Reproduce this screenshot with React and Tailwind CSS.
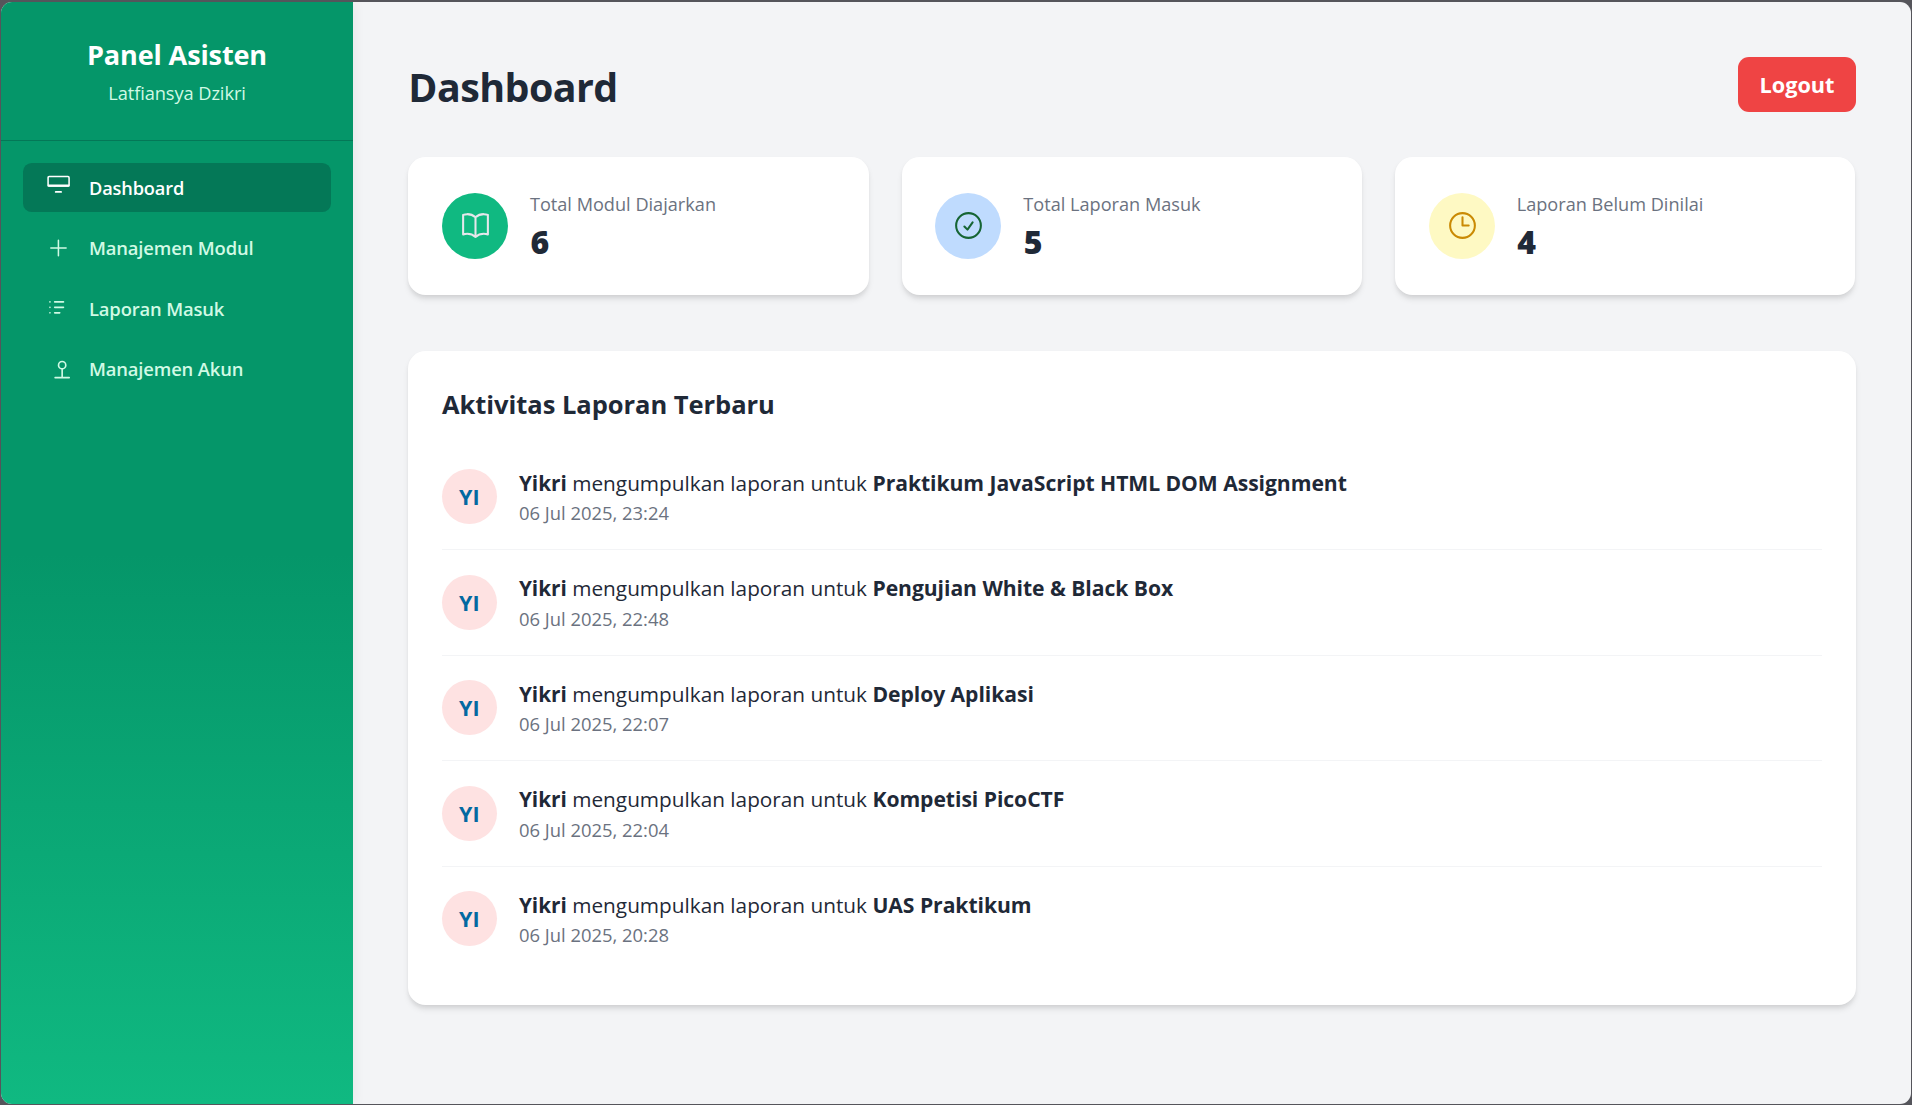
import React from "react";

function MonitorIcon() {
  return (
    <svg viewBox="0 0 24 24" className="size-[26.4px] shrink-0" fill="none" stroke="currentColor" strokeLinecap="round">
      <rect x="2.8" y="2.3" width="19.1" height="8.5" rx="1" strokeWidth="1.4" />
      <path d="M3.2 10.6h18.3" strokeWidth="2" />
      <path d="M9.8 16.3h4.8" strokeWidth="1.7" />
    </svg>
  );
}

function PlusIcon() {
  return (
    <svg viewBox="0 0 24 24" className="size-[26.4px] shrink-0" fill="none" stroke="currentColor" strokeWidth="1.4" strokeLinecap="round">
      <path d="M12.2 4.9v13.9M5.3 11.8h13.9" />
    </svg>
  );
}

function ListIcon() {
  return (
    <svg viewBox="0 0 24 24" className="size-[26.4px] shrink-0" fill="none" stroke="currentColor" strokeWidth="1.5" strokeLinecap="round">
      <path d="M8.8 6.3h8M8.8 11.2h8M8.8 16.2h4.6M4.5 6.3h.01M4.5 11.2h.01M4.5 16.2h.01" />
    </svg>
  );
}

function AccountIcon() {
  return (
    <svg viewBox="0 0 24 24" className="size-[26.4px] shrink-0" fill="none" stroke="currentColor" strokeWidth="1.5" strokeLinecap="round">
      <circle cx="15.6" cy="8.3" r="3.3" />
      <path d="M15.6 11.8v7.6M9.2 19.7h12.8" />
    </svg>
  );
}

function StatIcon({ d }) {
  return (
    <svg viewBox="0 0 24 24" className="mb-[1.4px] ml-[0.8px] size-[33px]" fill="none" stroke="currentColor" strokeWidth="1.5" strokeLinecap="round" strokeLinejoin="round">
      <path d={d} />
    </svg>
  );
}

const NAV = [
  { label: "Dashboard", Icon: MonitorIcon, active: true },
  { label: "Manajemen Modul", Icon: PlusIcon },
  { label: "Laporan Masuk", Icon: ListIcon },
  { label: "Manajemen Akun", Icon: AccountIcon },
];

const STATS = [
  {
    label: "Total Modul Diajarkan",
    value: 6,
    tone: "bg-[#10b981] text-[#e5e7eb]",
    d: "M12 6.042A8.967 8.967 0 0 0 6 3.75c-1.052 0-2.062.18-3 .512v14.25A8.987 8.987 0 0 1 6 18c2.305 0 4.408.867 6 2.292m0-14.25a8.966 8.966 0 0 1 6-2.292c1.052 0 2.062.18 3 .512v14.25A8.987 8.987 0 0 0 18 18a8.967 8.967 0 0 0-6 2.292m0-14.25v14.25",
  },
  {
    label: "Total Laporan Masuk",
    value: 5,
    tone: "bg-[#bfdbfe] text-[#166534]",
    d: "M9 12.75 11.25 15 15 9.75M21 12a9 9 0 1 1-18 0 9 9 0 0 1 18 0Z",
  },
  {
    label: "Laporan Belum Dinilai",
    value: 4,
    tone: "bg-[#fef9c3] text-[#ca8a04]",
    d: "M12 6v6h4.5m4.5 0a9 9 0 1 1-18 0 9 9 0 0 1 18 0Z",
  },
];

const REPORTS = [
  { title: "Praktikum JavaScript HTML DOM Assignment", date: "06 Jul 2025, 23:24" },
  { title: "Pengujian White & Black Box", date: "06 Jul 2025, 22:48" },
  { title: "Deploy Aplikasi", date: "06 Jul 2025, 22:07" },
  { title: "Kompetisi PicoCTF", date: "06 Jul 2025, 22:04" },
  { title: "UAS Praktikum", date: "06 Jul 2025, 20:28" },
];

function Sidebar() {
  return (
    <aside className="z-10 w-[352px] shrink-0 bg-[linear-gradient(180deg,#059669_50%,#10b981_100%)] shadow-[2px_0_11px_rgba(0,0,0,0.05)]">
      <div className="border-b border-[#047857] pt-[34.5px] pb-[35px] text-center">
        <h2 className="text-[27.1px] leading-[36px] font-bold tracking-[-0.15px] text-white">Panel Asisten</h2>
        <p className="mt-[8.5px] text-[18.24px] leading-[24px] tracking-[-0.08px] text-[#d1fae5]">Latfiansya Dzikri</p>
      </div>
      <nav className="flex flex-col gap-[11.5px] px-[22px] pt-[22px]">
        {NAV.map(({ label, Icon, active }) => (
          <a
            key={label}
            className={
              active
                ? "flex h-[49px] items-center gap-[17.6px] rounded-[8.8px] bg-[#047857] px-[22px] text-[18.2px] font-semibold tracking-[-0.15px] text-white"
                : "flex h-[49px] items-center gap-[17.6px] rounded-[8.8px] px-[22px] text-[18.4px] font-semibold tracking-[-0.15px] text-[#d1fae5]"
            }
          >
            <Icon />
            <span className={active ? "pt-[2px]" : ""}>{label}</span>
          </a>
        ))}
      </nav>
    </aside>
  );
}

function StatCard({ label, value, tone, d }) {
  return (
    <div className="flex h-[138.6px] items-center gap-[22px] rounded-[17.6px] bg-white px-[33.6px] shadow-[0_4.4px_6.6px_-1.1px_rgba(0,0,0,0.1),0_2.2px_4.4px_-1.1px_rgba(0,0,0,0.06)]">
      <div className={`flex size-[66px] shrink-0 items-center justify-center rounded-full ${tone}`}>
        <StatIcon d={d} />
      </div>
      <div className="pt-[2px]">
        <p className="text-[18.15px] leading-[27px] text-[#6b7280]">{label}</p>
        <p className="mt-[2px] pl-[0.5px] text-[32px] leading-[44px] font-extrabold text-[#1f2937]">{value}</p>
      </div>
    </div>
  );
}

function ReportRow({ title, date }) {
  return (
    <li className="flex h-[105.5px] items-center gap-[22px] border-b border-[#f3f4f6] last:border-transparent">
      <div className="flex size-[55px] shrink-0 items-center justify-center rounded-full bg-[#fee2e2] pt-px text-[21.5px] font-bold text-[#0369a1]">YI</div>
      <div className="pt-[0.4px]">
        <p className="text-[20.77px] leading-[30px] text-[#1f2937]">
          <strong className="font-bold">Yikri</strong> mengumpulkan laporan untuk{" "}
          <strong className="text-[21.13px] leading-none font-bold tracking-[-0.05px]">{title}</strong>
        </p>
        <p className="mt-[2.4px] text-[18.42px] leading-[26px] text-[#6b7280]">{date}</p>
      </div>
    </li>
  );
}

export default function App() {
  return (
    <div className="h-[1105px] bg-[#55555b] pt-[2px] pr-px pb-[1.5px] pl-px font-['Open_Sans','Noto_Sans',sans-serif]">
      <div className="flex h-full overflow-hidden rounded-[11px] bg-[#f3f4f6]">
        <Sidebar />
        <main className="min-w-0 flex-1 pt-[55px] pr-[55.5px] pl-[55.3px]">
          <header className="flex h-[55px] items-center justify-between">
            <h1 className="pt-[4px] text-[39.4px] leading-[50px] font-bold tracking-[-0.55px] text-[#1f2937]">Dashboard</h1>
            <button className="h-[55px] w-[118px] rounded-[11px] bg-[#ef4444] pt-[2px] pl-px text-[21.7px] font-bold text-white">Logout</button>
          </header>
          <section className="mt-[44.8px] grid grid-cols-3 gap-[33px]">
            {STATS.map((s) => (
              <StatCard key={s.label} {...s} />
            ))}
          </section>
          <section className="mt-[56px] h-[653.7px] rounded-[17.6px] bg-white px-[33.6px] pt-[35.4px] shadow-[0_4.4px_6.6px_-1.1px_rgba(0,0,0,0.1),0_2.2px_4.4px_-1.1px_rgba(0,0,0,0.06)]">
            <h3 className="text-[25.5px] leading-[35px] font-bold tracking-[-0.03px] text-[#1f2937]">Aktivitas Laporan Terbaru</h3>
            <ul className="mt-[22.9px]">
              {REPORTS.map((r) => (
                <ReportRow key={r.title} {...r} />
              ))}
            </ul>
          </section>
        </main>
      </div>
    </div>
  );
}
